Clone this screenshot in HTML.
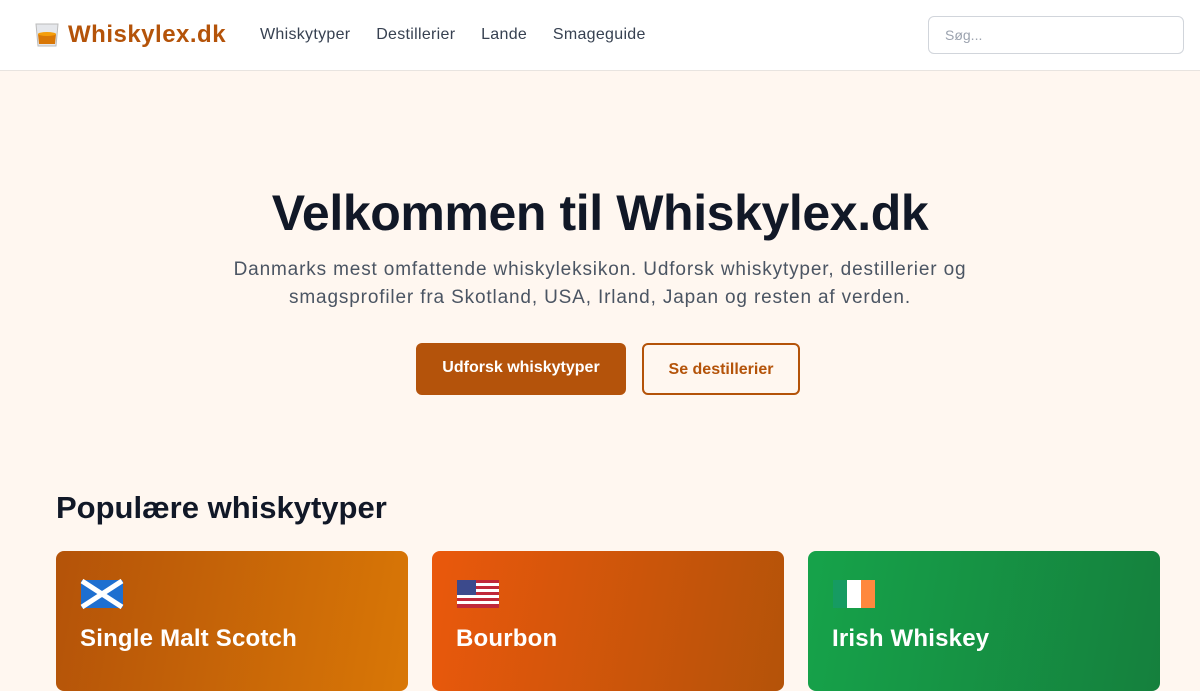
<!DOCTYPE html>
<html><head><meta charset="utf-8"><style>
*{box-sizing:border-box;margin:0;padding:0}
body{width:1200px;height:675px;overflow:hidden;background:#fff7f0;font-family:"Liberation Sans",sans-serif;color:#111827}
header{height:71px;background:#fff;border-bottom:1px solid #e8e4e0;position:relative}
.logo{position:absolute;left:34px;top:21px;display:flex;align-items:center;gap:8px;font-weight:bold;font-size:24px;color:#b45309;letter-spacing:0.5px}
nav{position:absolute;left:260px;top:26px;font-size:16px;color:#374151;letter-spacing:0.3px}
nav span{margin-right:21px}
.search{position:absolute;left:928px;top:16px;width:256px;height:38px;border:1px solid #d1d5db;border-radius:6px;font-size:14px;color:#9ca3af;padding:10px 16px}
h1{position:absolute;top:184px;width:100%;text-align:center;font-size:50px;font-weight:bold;color:#111827;letter-spacing:-0.4px}
.sub{position:absolute;top:256px;width:100%;text-align:center;font-size:19px;line-height:28px;color:#4b5563;letter-spacing:0.85px}
.b1{position:absolute;left:416px;top:343px;width:210px;height:52px;background:#b4530b;color:#fff;border-radius:6px;font-weight:bold;font-size:16px;text-align:center;line-height:50px}
.b2{position:absolute;left:642px;top:343px;width:158px;height:52px;border:2px solid #b45309;color:#b45309;border-radius:6px;font-weight:bold;font-size:16px;text-align:center;line-height:50px}
h2{position:absolute;left:56px;top:490px;font-size:31px;font-weight:bold}
.card{position:absolute;top:551px;width:352px;height:140px;border-radius:8px;color:#fff;padding:26px 24px}
.card svg{display:block;width:44px;height:34px}
.card b{display:block;margin-top:14px;font-size:24px;letter-spacing:0.2px}
</style></head><body>
<header>
<div class="logo"><svg width="26" height="28" viewBox="0 0 26 28"><path d="M2 3h22l-2 22H4z" fill="#e5e7eb" stroke="#bbb"/><path d="M4 13h18l-1 10H5z" fill="#d97706"/><ellipse cx="13" cy="13" rx="9" ry="2" fill="#f59e0b"/></svg>Whiskylex.dk</div>
<nav><span>Whiskytyper</span> <span>Destillerier</span> <span>Lande</span> <span>Smageguide</span></nav>
<div class="search">Søg...</div>
</header>
<h1>Velkommen til Whiskylex.dk</h1>
<div class="sub">Danmarks mest omfattende whiskyleksikon. Udforsk whiskytyper, destillerier og<br>smagsprofiler fra Skotland, USA, Irland, Japan og resten af verden.</div>
<div class="b1">Udforsk whiskytyper</div>
<div class="b2">Se destillerier</div>
<h2>Populære whiskytyper</h2>
<div class="card" style="left:56px;background:linear-gradient(100deg,#b45309,#d97706)"><svg viewBox="0 0 44 34"><rect x="1" y="3" width="42" height="28" rx="2" fill="#1e6fd0"/><path d="M2 4L42 30M42 4L2 30" stroke="#fff" stroke-width="5"/></svg><b>Single Malt Scotch</b></div>
<div class="card" style="left:432px;background:linear-gradient(100deg,#ea580c,#b45309)"><svg viewBox="0 0 44 34"><rect x="1" y="3" width="42" height="28" rx="2" fill="#fff"/><g fill="#c0283a"><rect x="1" y="3" width="42" height="3"/><rect x="1" y="9" width="42" height="3"/><rect x="1" y="15" width="42" height="3"/><rect x="1" y="21" width="42" height="3"/><rect x="1" y="27" width="42" height="4"/></g><rect x="1" y="3" width="19" height="15" fill="#3c4a8c"/></svg><b>Bourbon</b></div>
<div class="card" style="left:808px;background:linear-gradient(100deg,#16a34a,#15803d)"><svg viewBox="0 0 44 34"><rect x="1" y="3" width="14" height="28" fill="#169b62"/><rect x="15" y="3" width="14" height="28" fill="#fff"/><rect x="29" y="3" width="14" height="28" fill="#ff883e"/></svg><b>Irish Whiskey</b></div>
</body></html>
